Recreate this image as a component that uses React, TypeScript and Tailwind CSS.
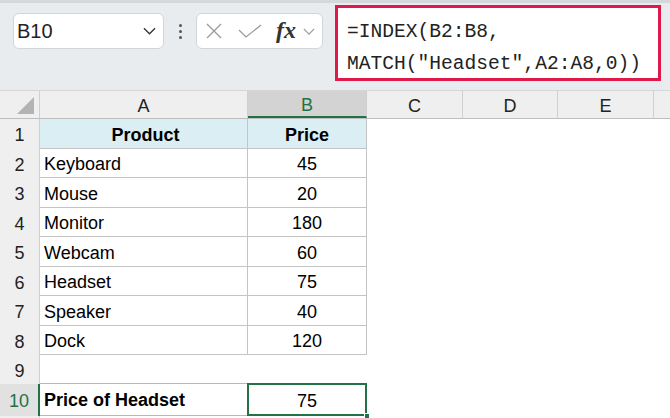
import React from 'react';

const cols = [
  { id: 'A', w: 'w-[208px]' },
  { id: 'B', w: 'w-[119px]' },
  { id: 'C', w: 'w-[96px]' },
  { id: 'D', w: 'w-[95px]' },
  { id: 'E', w: 'w-[96px]' },
];

type Row = { n: number; a?: string; b?: string; h: string; head?: boolean; table?: boolean };

const rows: Row[] = [
  { n: 1, a: 'Product', b: 'Price', h: 'h-[30px]', head: true, table: true },
  { n: 2, a: 'Keyboard', b: '45', h: 'h-[29px]', table: true },
  { n: 3, a: 'Mouse', b: '20', h: 'h-[30px]', table: true },
  { n: 4, a: 'Monitor', b: '180', h: 'h-[29px]', table: true },
  { n: 5, a: 'Webcam', b: '60', h: 'h-[30px]', table: true },
  { n: 6, a: 'Headset', b: '75', h: 'h-[29px]', table: true },
  { n: 7, a: 'Speaker', b: '40', h: 'h-[30px]', table: true },
  { n: 8, a: 'Dock', b: '120', h: 'h-[29px]', table: true },
  { n: 9, h: 'h-[29px]' },
];

function Chevron({ className }: { className?: string }) {
  return (
    <svg className={className} viewBox="0 0 14 8" fill="none" stroke="currentColor" strokeWidth="1.4">
      <path d="M1 1l6 6 6-6" />
    </svg>
  );
}

export default function App() {
  return (
    <div className="w-[670px] h-[418px] overflow-hidden bg-white text-black font-['Liberation_Sans',Arial,sans-serif]">
      {/* toolbar */}
      <div className="h-[90px] bg-[#e9ecef] relative">
        <div className="h-[3px] bg-[#d5d8db]" />
        <div className="flex items-start pl-[13px] pt-[10px]">
          <div className="w-[151px] h-[36px] bg-white border border-[#d3d6d9] rounded-[6px] flex items-center justify-between pl-[3px] pr-[7px]">
            <span className="text-[20px] text-[#222]">B10</span>
            <Chevron className="w-[13px] h-[8px] text-[#333]" />
          </div>
          <div className="w-[32px] h-[36px] flex flex-col items-center justify-center gap-[3px]">
            <span className="w-[3px] h-[3px] rounded-full bg-[#555]" />
            <span className="w-[3px] h-[3px] rounded-full bg-[#555]" />
            <span className="w-[3px] h-[3px] rounded-full bg-[#555]" />
          </div>
          <div className="w-[127px] h-[36px] bg-white border border-[#d3d6d9] rounded-[6px] flex items-center pl-[9px] pr-[4px]">
            <svg className="w-[16px] h-[16px] text-[#9a9a9a]" viewBox="0 0 16 16" fill="none" stroke="currentColor" strokeWidth="1.3">
              <path d="M1 1l14 14M15 1L1 15" />
            </svg>
            <svg className="w-[24px] h-[14px] ml-[16px] text-[#9a9a9a]" viewBox="0 0 24 14" fill="none" stroke="currentColor" strokeWidth="1.3">
              <path d="M1 6l7 7L23 1" />
            </svg>
            <span className="ml-[14px] font-['Liberation_Serif',serif] italic font-bold text-[24px] leading-none text-[#333] -mt-[2px]">fx</span>
            <Chevron className="ml-[7px] w-[12px] h-[7px] text-[#999]" />
          </div>
        </div>
        <div className="absolute left-[335px] top-[5px] w-[326px] h-[76px] bg-white border-[3px] border-[#e0194b] pl-[9px] pt-[8px] font-['Liberation_Mono',monospace] text-[19.6px] leading-[32px] text-[#222] whitespace-pre">
          <div>=INDEX(B2:B8,</div>
          <div>MATCH("Headset",A2:A8,0))</div>
        </div>
      </div>

      {/* column headers */}
      <div className="flex h-[29px] bg-[#efefef] border-t border-t-[#d6d6d6] border-b border-b-[#bdbdbd] text-[18px] text-[#222]">
        <div className="w-[40px] shrink-0 border-r border-[#d0d0d0] relative">
          <div className="absolute right-[5px] bottom-[4px] w-0 h-0 border-l-[17px] border-l-transparent border-b-[17px] border-b-[#b3b3b3]" />
        </div>
        {cols.map((c) => (
          <div
            key={c.id}
            className={`${c.w} shrink-0 border-r border-[#d0d0d0] flex items-center justify-center pt-[4px] ${
              c.id === 'B' ? 'bg-[#d3d3d3] text-[#217346] border-b-2 border-b-[#217346]' : ''
            }`}
          >
            {c.id}
          </div>
        ))}
        <div className="flex-1" />
      </div>

      {/* body */}
      {rows.map((r) => (
        <div key={r.n} className={`flex ${r.h} text-[18px]`}>
          <div className="w-[40px] shrink-0 bg-[#efefef] border-r border-[#d0d0d0] flex items-center justify-center pt-[3px] text-[#222]">
            {r.n}
          </div>
          <div
            className={`w-[208px] shrink-0 flex items-center pl-[4px] pt-[3px] ${
              r.table ? 'border-r border-b border-[#c4c4c4]' : r.n === 9 ? 'border-b border-[#b8b8b8]' : ''
            } ${r.head ? 'bg-[#daeef3] justify-center font-bold' : ''}`}
          >
            {r.a}
          </div>
          <div
            className={`w-[119px] shrink-0 flex items-center justify-center pt-[3px] ${
              r.table ? 'border-r border-b border-[#c4c4c4]' : ''
            } ${r.head ? 'bg-[#daeef3] font-bold' : ''}`}
          >
            {r.b}
          </div>
          <div className="flex-1" />
        </div>
      ))}

      {/* row 10 */}
      <div className="flex h-[32px] text-[18px]">
        <div className="w-[40px] shrink-0 bg-[#e1e1e1] border-r-2 border-[#217346] flex items-center justify-center pt-[2px] text-[#217346]">
          10
        </div>
        <div className="w-[207px] shrink-0 flex items-center pl-[4px] pt-[2px] font-bold border-b border-[#b8b8b8]">
          Price of Headset
        </div>
        <div className="w-[120px] shrink-0 relative flex items-center justify-center pt-[2px]">
          <div className="absolute -top-[1px] left-0 right-0 bottom-0 border-2 border-[#217346]" />
          <div className="absolute -right-[3px] -bottom-[3px] w-[6px] h-[6px] bg-[#217346] border border-white" />
          <span className="relative">75</span>
        </div>
        <div className="flex-1" />
      </div>
      <div className="flex h-[10px]">
        <div className="w-[40px] shrink-0 bg-[#efefef] border-r border-[#d0d0d0]" />
      </div>
    </div>
  );
}
